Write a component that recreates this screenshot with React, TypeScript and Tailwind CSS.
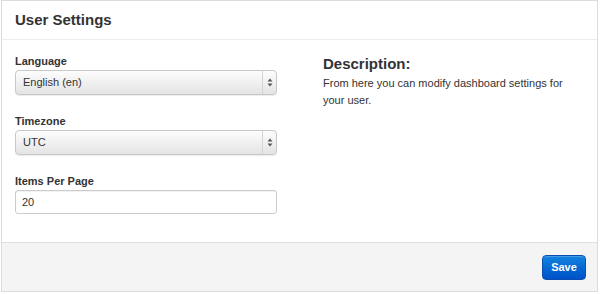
import React from "react";

const font = { fontFamily: '"Liberation Sans", Arial, sans-serif' };

function SelectBox({ value }: { value: string }) {
  return (
    <div className="flex h-[25px] w-[262px] items-stretch rounded-[4px] border border-[#c8c8c8] bg-gradient-to-b from-[#fdfdfd] to-[#e4e4e4] shadow-[0_1px_1px_rgba(0,0,0,0.08)]">
      <div className="flex flex-1 items-center pl-[7px] text-[11px] text-[#333]">{value}</div>
      <div className="flex w-[14px] items-center justify-center border-l border-[#d4d4d4]">
        <svg width="6" height="9" viewBox="0 0 6 9" className="text-[#555]">
          <path d="M3 0.5 L5.5 3.5 H0.5 Z" fill="currentColor" />
          <path d="M3 8.5 L5.5 5.5 H0.5 Z" fill="currentColor" />
        </svg>
      </div>
    </div>
  );
}

function Field({ label, children }: { label: string; children: React.ReactNode }) {
  return (
    <div className="mb-[19px]">
      <div className="mb-[2px] text-[11px] leading-[14px] font-bold text-[#333]">{label}</div>
      {children}
    </div>
  );
}

export default function App() {
  return (
    <div className="h-[294px] w-[600px] bg-white pl-px" style={font}>
      <div className="w-[597px] border border-[#dcdcdc]">
        {/* Header */}
        <div className="border-b border-[#ececec] px-[13px] pt-[10px] pb-[10px]">
          <h1 className="text-[15px] leading-[18px] font-bold text-[#333]">User Settings</h1>
        </div>

        {/* Body */}
        <div className="flex h-[202px] px-[13px] pt-[14px]">
          <div className="w-[262px]">
            <Field label="Language">
              <SelectBox value="English (en)" />
            </Field>
            <Field label="Timezone">
              <SelectBox value="UTC" />
            </Field>
            <Field label="Items Per Page">
              <div className="flex h-[24px] w-[262px] items-center rounded-[3px] border border-[#cccccc] bg-white pl-[6px] text-[11px] text-[#333] shadow-[inset_0_1px_1px_rgba(0,0,0,0.06)]">
                20
              </div>
            </Field>
          </div>
          <div className="ml-[46px] w-[260px] pt-px">
            <h2 className="text-[15px] leading-[18px] font-bold text-[#333]">Description:</h2>
            <p className="mt-[2px] text-[11px] leading-[17px] text-[#333]">
              From here you can modify dashboard settings for your user.
            </p>
          </div>
        </div>

        {/* Footer */}
        <div className="flex h-[49px] items-center justify-end border-t border-[#e0e0e0] bg-[#f4f4f4] pr-[11px]">
          <button className="h-[25px] w-[44px] rounded-[4px] border border-[#0a4fb0] bg-gradient-to-b from-[#1583df] to-[#0050c8] text-[11px] font-bold text-white shadow-[inset_0_1px_0_rgba(255,255,255,0.2)]">
            Save
          </button>
        </div>
      </div>
    </div>
  );
}
